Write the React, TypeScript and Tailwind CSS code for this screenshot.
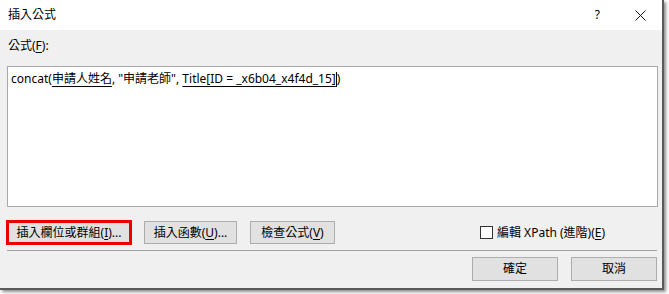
import React from "react";

const font = { fontFamily: "'Noto Sans', 'Noto Sans CJK TC', sans-serif" };

function Btn({ children, className = "" }: { children: React.ReactNode; className?: string }) {
  return (
    <div
      className={`h-[23px] flex items-center justify-center bg-[#e1e1e1] border border-[#adadad] text-[12px] text-black leading-none ${className}`}
    >
      {children}
    </div>
  );
}

export default function App() {
  return (
    <div className="w-[669px] h-[294px] bg-white overflow-hidden" style={font}>
      <div className="w-[664px] h-[290px] border-r-2 border-b-2 border-[#5a5a5a] shadow-[2px_2px_3px_rgba(0,0,0,0.45)] flex flex-col">
        {/* title bar */}
        <div className="h-[30px] bg-white flex items-center shrink-0">
          <span className="ml-[8px] text-[12px] text-black">插入公式</span>
          <span className="ml-auto mr-[35px] text-[12px] text-black">?</span>
          <svg width="11" height="11" viewBox="0 0 11 11" className="mr-[16px]">
            <path d="M0.5 0.5 L10.5 10.5 M10.5 0.5 L0.5 10.5" stroke="#111" strokeWidth="1" fill="none" />
          </svg>
        </div>

        <div className="flex-1 bg-[#f0f0f0] flex flex-col pl-[7px] pr-[5px]">
          <div className="h-[30px] flex items-center pt-[1px] ml-[1px] text-[12px] text-black">
            公式(<span className="underline underline-offset-2">F</span>):
          </div>

          <div className="mt-[6px] mr-[-1px] h-[141px] bg-white border border-[#a9a9a9] px-[3px] pt-[3px]">
            <div className="text-[12px] text-black leading-[18px] whitespace-pre flex items-center">
              <span>concat(</span>
              <span className="underline underline-offset-[3px]">申請人姓名</span>
              <span>, "申請老師", </span>
              <span className="underline underline-offset-[3px]">Title[ID = _x6b04_x4f4d_15]</span>
              <span className="inline-block w-px h-[15px] bg-black" />
              <span>)</span>
            </div>
          </div>

          <div className="mt-[13px] flex items-center">
            <div className="-ml-[1px] w-[126px] h-[25px] border-[3px] border-[#ee0000] bg-[#e1e1e1] flex items-center justify-center text-[12px] text-black">
              插入欄位或群組(<span className="underline underline-offset-2">I</span>)...
            </div>
            <Btn className="ml-[12px] w-[93px]">
              插入函數(<span className="underline underline-offset-2">U</span>)...
            </Btn>
            <Btn className="ml-[13px] w-[85px]">
              檢查公式(<span className="underline underline-offset-2">V</span>)
            </Btn>
            <div className="ml-[145px] flex items-center text-[12px] text-black">
              <div className="w-[13px] h-[13px] border border-[#333] bg-white" />
              <span className="ml-[4px]">
                編輯 XPath (進階)(<span className="underline underline-offset-2">E</span>)
              </span>
            </div>
          </div>

          <div className="mt-[5px] w-[650px] border-t border-[#a0a0a0]" />

          <div className="mt-[6px] flex justify-end">
            <Btn className="w-[86px] h-[24px]">確定</Btn>
            <Btn className="ml-[13px] w-[86px] h-[24px]">取消</Btn>
          </div>
        </div>
      </div>
    </div>
  );
}
